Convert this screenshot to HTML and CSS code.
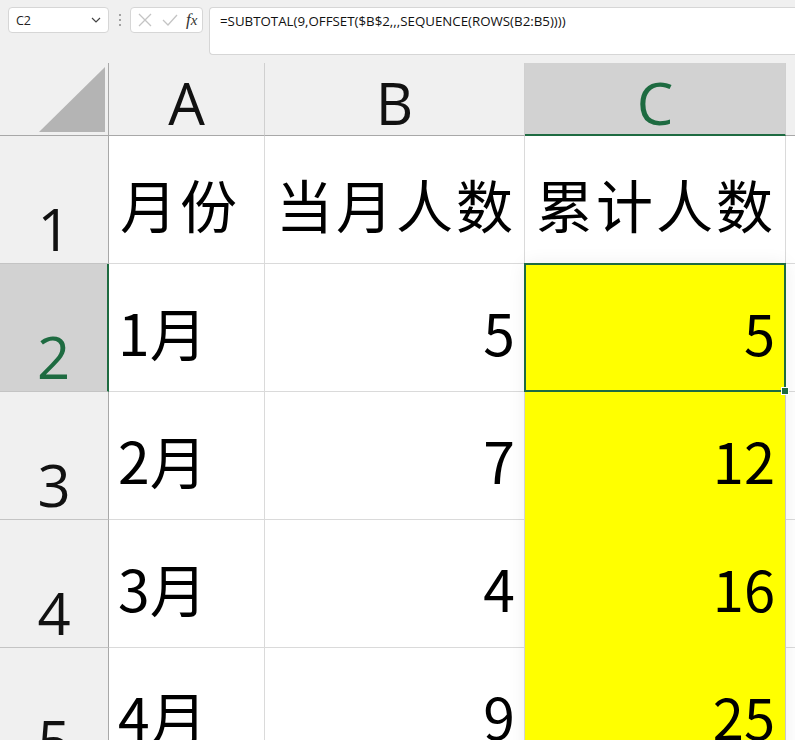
FILE: index.html
```html
<!DOCTYPE html>
<html lang="zh-CN">
<head>
    <meta charset="UTF-8" />
    <title>累计人数</title>
    <link rel="stylesheet" href="styles.css">
</head>
<body>
<div class="formula-bar">
    <div class="name-box">
        <span>C2</span>
        <svg class="chevron" width="10" height="6" viewBox="0 0 10 6"><path d="M1 1 L5 5 L9 1" fill="none" stroke="#444" stroke-width="1.2"/></svg>
    </div>
    <div class="dots"><i></i><i></i><i></i></div>
    <div class="fx-box">
        <svg width="14" height="14" viewBox="0 0 14 14"><path d="M1 1 L13 13 M13 1 L1 13" stroke="#c4c4c4" stroke-width="1.3"/></svg>
        <svg width="16" height="14" viewBox="0 0 16 14"><path d="M1 7 L6 12 L15 2" fill="none" stroke="#c4c4c4" stroke-width="1.3"/></svg>
        <span class="fx"><i>f</i><i>x</i></span>
    </div>
    <div class="formula-input">=SUBTOTAL(9,OFFSET($B$2,,,SEQUENCE(ROWS(B2:B5))))</div>
</div>

<div class="sheet">
    <div class="corner"><div class="triangle"></div></div>
    <div class="col-head">A</div>
    <div class="col-head">B</div>
    <div class="col-head active">C</div>
    <div class="col-head"></div>

    <div class="row-head">1</div>
    <div class="cell title">月份</div>
    <div class="cell title">当月人数</div>
    <div class="cell title">累计人数</div>
    <div class="cell"></div>

    <div class="row-head active">2</div>
    <div class="cell">1月</div>
    <div class="cell num">5</div>
    <div class="filled">
        <div class="filled-cell">5</div>
        <div class="filled-cell">12</div>
        <div class="filled-cell">16</div>
        <div class="filled-cell">25</div>
        <div class="selection"><span class="handle"></span></div>
    </div>
    <div class="cell"></div>

    <div class="row-head">3</div>
    <div class="cell">2月</div>
    <div class="cell num">7</div>
    <div class="cell"></div>

    <div class="row-head">4</div>
    <div class="cell">3月</div>
    <div class="cell num">4</div>
    <div class="cell"></div>

    <div class="row-head">5</div>
    <div class="cell">4月</div>
    <div class="cell num">9</div>
    <div class="cell"></div>
</div>
</body>
</html>
```

FILE: styles.css
```css
body {
    margin: 0;
    background: #f0f0f0;
    font-family: "Noto Sans CJK SC", sans-serif;
    overflow: hidden;
    height: 740px;
}

/* formula bar */
.formula-bar {
    display: flex;
    align-items: flex-start;
    padding: 7px 0 0 8px;
    height: 56px;
    box-sizing: border-box;
}

.name-box {
    width: 101px;
    height: 26px;
    box-sizing: border-box;
    background: #fff;
    border: 1px solid #d6d6d6;
    border-radius: 4px;
    display: flex;
    align-items: center;
    justify-content: space-between;
    padding: 0 7px 0 7px;
    font-family: "Open Sans", sans-serif;
    font-size: 12.5px;
    color: #222;
}

.dots {
    width: 21px;
    height: 26px;
    display: flex;
    flex-direction: column;
    align-items: center;
    justify-content: center;
    gap: 3px;
}

.dots i {
    width: 2px;
    height: 2px;
    background: #888;
    border-radius: 1px;
}

.fx-box {
    width: 73px;
    height: 26px;
    box-sizing: border-box;
    background: #fff;
    border: 1px solid #d6d6d6;
    border-radius: 4px;
    display: flex;
    align-items: center;
    gap: 10px;
    padding-left: 7px;
}

.fx {
    font-family: "Liberation Serif", serif;
    font-size: 17px;
    color: #333;
    margin-left: -2px;
}

.fx i:last-child {
    font-size: 15px;
}

.formula-input {
    flex: 1;
    margin-left: 6px;
    height: 48px;
    box-sizing: border-box;
    background: #fff;
    border: 1px solid #d6d6d6;
    border-right: none;
    border-radius: 4px 0 0 4px;
    padding: 4px 0 0 10px;
    font-family: "Open Sans", sans-serif;
    font-size: 13.3px;
    color: #111;
}

/* grid */
.sheet {
    margin-top: 7px;
    display: grid;
    grid-template-columns: 109px 156px 260px 261px 1fr;
    grid-template-rows: 73px repeat(5, 128px);
    background: #fff;
}

.corner {
    background: #f0f0f0;
    border-right: 1px solid #a8a8a8;
    border-bottom: 1px solid #a8a8a8;
    position: relative;
}

.triangle {
    position: absolute;
    right: 3px;
    bottom: 3px;
    width: 66px;
    height: 65px;
    background: #b4b4b4;
    clip-path: polygon(100% 0, 100% 100%, 0 100%);
}

.col-head {
    background: #f0f0f0;
    border-right: 1px solid #d0d0d0;
    border-bottom: 1px solid #a8a8a8;
    display: flex;
    align-items: flex-end;
    justify-content: center;
    font-family: "Open Sans", sans-serif;
    font-size: 58px;
    line-height: 58px;
    padding-bottom: 3px;
    color: #111;
}

.col-head.active {
    background: #d2d2d2;
    color: #1e6b41;
    border-bottom: 2px solid #1e6b41;
    padding-bottom: 2px;
}

.row-head {
    background: #f0f0f0;
    border-right: 1px solid #a8a8a8;
    border-bottom: 1px solid #c4c4c4;
    display: flex;
    align-items: flex-end;
    justify-content: center;
    font-family: "Open Sans", sans-serif;
    font-size: 58px;
    line-height: 58px;
    padding-bottom: 5px;
    color: #111;
}

.row-head.active {
    background: #d2d2d2;
    color: #1e6b41;
    border-right: 2px solid #1e6b41;
}

.cell {
    border-right: 1px solid #dadada;
    border-bottom: 1px solid #dadada;
    display: flex;
    align-items: flex-end;
    padding: 0 0 28px 9px;
    font-size: 57px;
    line-height: 64px;
    color: #000;
    white-space: nowrap;
    overflow: hidden;
}

.cell.title {
    letter-spacing: 3px;
    padding-left: 11px;
}

.cell.num {
    justify-content: flex-end;
    padding-right: 9px;
}

.filled {
    grid-column: 4;
    grid-row: 3 / 7;
    background: #ffff00;
    border-right: 1px solid #c8c8c8;
    display: flex;
    flex-direction: column;
    position: relative;
    box-shadow: 0 0 18px rgba(0, 0, 0, 0.07);
    z-index: 1;
}

.filled-cell {
    height: 128px;
    box-sizing: border-box;
    display: flex;
    align-items: flex-end;
    justify-content: flex-end;
    padding: 0 10px 28px 0;
    font-size: 56px;
    line-height: 64px;
    color: #000;
}

.selection {
    position: absolute;
    left: -1px;
    top: -1px;
    width: 262px;
    height: 129px;
    box-sizing: border-box;
    border: 2px solid #1e6b41;
}

.handle {
    position: absolute;
    right: -5px;
    bottom: -5px;
    width: 6px;
    height: 6px;
    background: #1e6b41;
    border: 1px solid #fff;
}
```
